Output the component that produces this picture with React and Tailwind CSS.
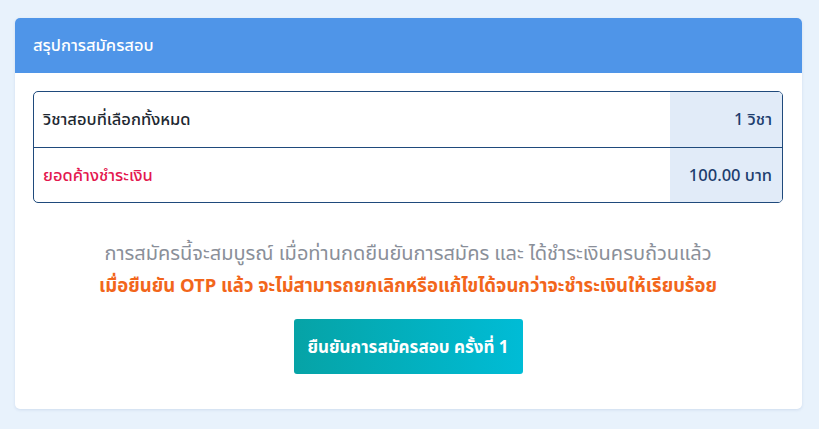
const rows = [
  { label: 'วิชาสอบที่เลือกทั้งหมด', value: '1 วิชา', labelClass: 'text-[#222831]' },
  { label: 'ยอดค้างชำระเงิน', value: '100.00 บาท', labelClass: 'text-[#e3184f]' },
];

export default function App() {
  return (
    <div
      className="min-h-[429px] bg-[#e8f2fc] pl-[15px] pr-[17px] pt-[18px] pb-[19px]"
      style={{ fontFamily: '"Noto Sans", "Noto Sans Thai", "DejaVu Sans", sans-serif' }}
    >
      <div className="overflow-hidden rounded-[5px] bg-white shadow-[0_1px_3px_rgba(60,100,160,0.15)]">
        {/* Header */}
        <div className="flex h-[55px] items-center bg-[#4f95e8] px-[18px]">
          <h2 className="text-[16.5px] font-medium text-white">สรุปการสมัครสอบ</h2>
        </div>

        {/* Body */}
        <div className="pl-[18px] pr-[19px] pt-[18px] pb-[35px]">
          <div className="overflow-hidden rounded-[5px] border border-[#1f4a7c]">
            {rows.map((row, i) => (
              <div
                key={i}
                className={`flex h-[55px] ${i > 0 ? 'border-t border-[#1f4a7c]' : ''}`}
              >
                <div className={`flex flex-1 items-center px-[9px] text-[16.5px] font-medium ${row.labelClass}`}>
                  {row.label}
                </div>
                <div className="flex w-[112px] items-center justify-end bg-[#e1ebf8] px-[10px] text-[16.5px] font-medium text-[#1d3d6e]">
                  {row.value}
                </div>
              </div>
            ))}
          </div>

          <div className="mt-[34px] flex flex-col items-center text-center">
            <p className="whitespace-nowrap text-[20px] leading-[32px] text-[#8a8f99]">
              การสมัครนี้จะสมบูรณ์ เมื่อท่านกดยืนยันการสมัคร และ ได้ชำระเงินครบถ้วนแล้ว
            </p>
            <p className="whitespace-nowrap text-[18.5px] font-bold leading-[32px] text-[#f2661b]">
              เมื่อยืนยัน OTP แล้ว จะไม่สามารถยกเลิกหรือแก้ไขได้จนกว่าจะชำระเงินให้เรียบร้อย
            </p>
            <button className="mt-[18px] h-[55px] w-[229px] rounded-[3px] bg-gradient-to-r from-[#06a3a6] to-[#00bcd6] text-[17px] font-bold text-white">
              ยืนยันการสมัครสอบ ครั้งที่ 1
            </button>
          </div>
        </div>
      </div>
    </div>
  );
}
